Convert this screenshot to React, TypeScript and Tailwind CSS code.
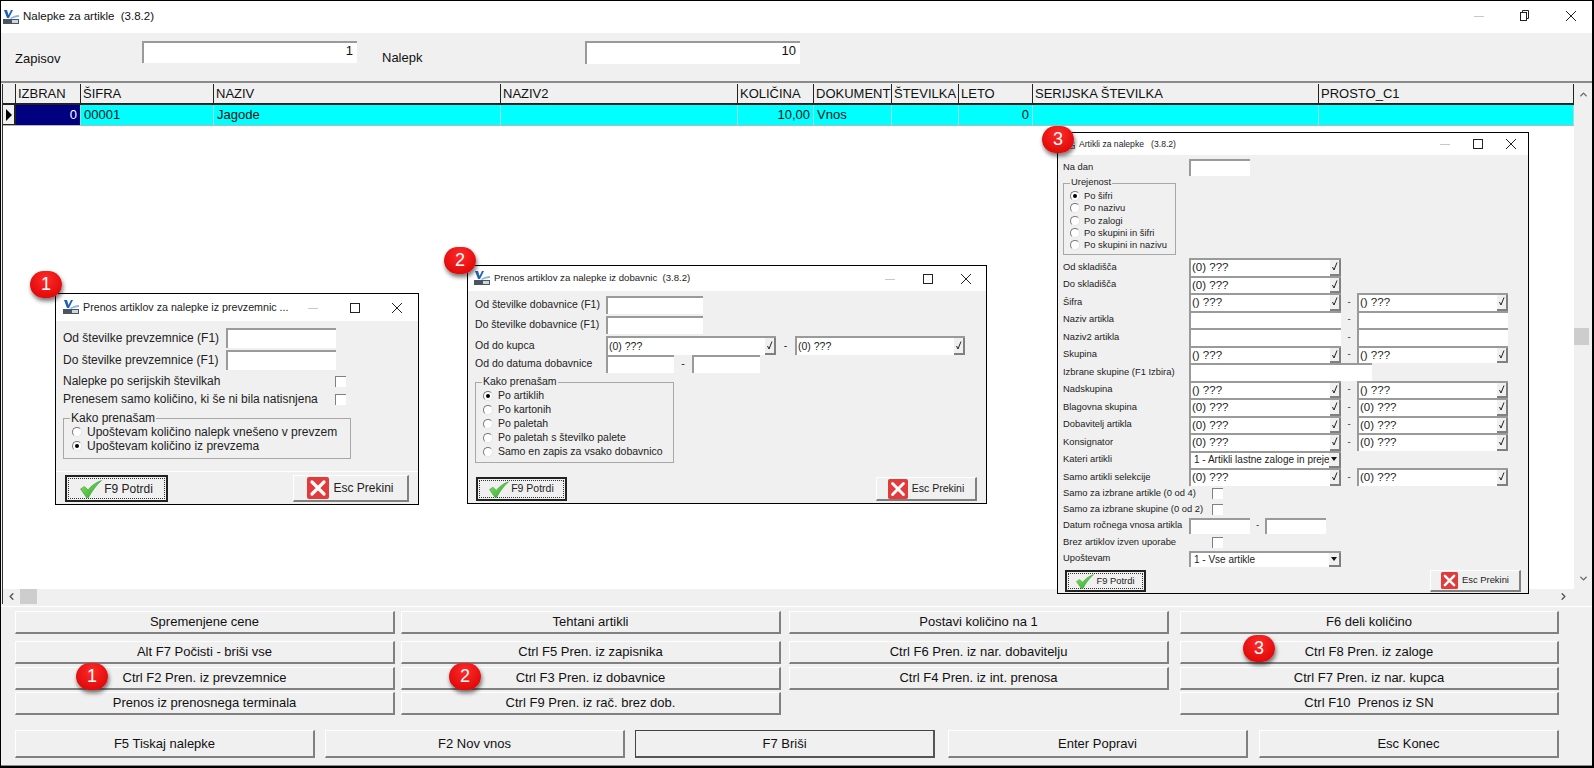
import React from 'react';
import { ChevronUp, ChevronDown, ChevronLeft, ChevronRight } from 'lucide-react';

const columns = [
  { title: 'IZBRAN', w: 'w-[65px]', value: '0', right: true, navy: true },
  { title: 'ŠIFRA', w: 'w-[133px]', value: '00001' },
  { title: 'NAZIV', w: 'w-[287px]', value: 'Jagode' },
  { title: 'NAZIV2', w: 'w-[237px]', value: '' },
  { title: 'KOLIČINA', w: 'w-[76px]', value: '10,00', right: true },
  { title: 'DOKUMENT', w: 'w-[78px]', value: 'Vnos' },
  { title: 'ŠTEVILKA', w: 'w-[67px]', value: '' },
  { title: 'LETO', w: 'w-[74px]', value: '0', right: true },
  { title: 'SERIJSKA ŠTEVILKA', w: 'w-[286px]', value: '' },
  { title: 'PROSTO_C1', w: 'w-[255px]', value: '' },
];

const AppLogo = ({ w = 16, h = 14 }: { w?: number; h?: number }) => (
  <svg width={w} height={h} viewBox="0 0 16 14" className="shrink-0">
    <path d="M1 0h3l1.5 5L8 0h2L6 8H4z" fill="#1f5fb8" />
    <path d="M7 8 C10 6 13 5 16 5 L16 7 C13 7 10 8 8 9z" fill="#8fb6e0" />
    <rect x="0" y="9" width="16" height="5" fill="#4a5560" />
    <rect x="9" y="10" width="6" height="3" fill="#cfd6dc" />
  </svg>
);

const WinControls = ({ restore, gap = 'gap-[27px]', className = '' }: { restore?: boolean; gap?: string; className?: string }) => (
  <div className={`flex items-center ${gap} ${className}`}>
    <svg width="10" height="10" viewBox="0 0 10 10">
      <path d="M0 5.5h10" stroke="#c8c8c8" />
    </svg>
    {restore ? (
      <svg width="10" height="11" viewBox="0 0 10 11" fill="none" stroke="#222">
        <rect x="0.5" y="2.5" width="6" height="8" />
        <path d="M2.5 2.5v-2h6v8h-2" />
      </svg>
    ) : (
      <svg width="10" height="10" viewBox="0 0 10 10" fill="none" stroke="#222">
        <rect x="0.5" y="0.5" width="9" height="9" />
      </svg>
    )}
    <svg width="10" height="10" viewBox="0 0 10 10" stroke="#222">
      <path d="M0 0l10 10M10 0L0 10" />
    </svg>
  </div>
);

const Sunken = ({ className, children }: { className: string; children?: React.ReactNode }) => (
  <div className={`bg-white border-t-2 border-l-2 border-t-[#9a9a9a] border-l-[#9a9a9a] overflow-hidden ${className}`}>
    {children}
  </div>
);

const Combo = ({ value, className }: { value: string; className: string }) => (
  <Sunken className={`flex items-stretch justify-between ${className}`}>
    <span className="pl-px leading-none self-center whitespace-nowrap">{value}</span>
    <span className="w-[11px] bg-[#f0f0f0] border-r-2 border-b-2 border-r-[#808080] border-b-[#808080] flex items-center justify-center shrink-0">
      <svg width="6" height="9" viewBox="0 0 6 9" fill="none" stroke="#222">
        <path d="M0.5 5l1.5 3L5 0.5" />
      </svg>
    </span>
  </Sunken>
);

const Select = ({ value, className }: { value: string; className: string }) => (
  <Sunken className={`flex items-stretch justify-between ${className}`}>
    <span className="pl-[3px] self-center leading-none whitespace-nowrap overflow-hidden">{value}</span>
    <span className="w-[12px] bg-[#f0f0f0] border-r-2 border-b-2 border-r-[#808080] border-b-[#808080] flex items-center justify-center shrink-0">
      <svg width="6" height="4" viewBox="0 0 6 4">
        <path d="M0 0h6L3 4z" fill="#111" />
      </svg>
    </span>
  </Sunken>
);

const CheckBox = ({ className = '' }: { className?: string }) => (
  <span className={`block w-[11px] h-[11px] bg-white border-t border-l border-t-[#808080] border-l-[#808080] ${className}`} />
);

const Radio = ({ on }: { on?: boolean }) => (
  <span className="w-[10px] h-[10px] rounded-full bg-white border border-[#e4e4e4] border-t-[#777] border-l-[#777] flex items-center justify-center shrink-0">
    {on && <span className="w-[4px] h-[4px] rounded-full bg-black" />}
  </span>
);

const Group = ({ title, items, className, rowClass, textClass }: {
  title: string;
  items: { label: string; on?: boolean }[];
  className: string;
  rowClass: string;
  textClass: string;
}) => (
  <div className={`border border-[#a8a8a8] ${className}`}>
    <div className="-mt-[7px] ml-[6px] px-px w-fit bg-[#f0f0f0] leading-none h-[13px]">{title}</div>
    {items.map(item => (
      <div key={item.label} className={`flex items-center ${rowClass}`}>
        <Radio on={item.on} />
        <span className={`whitespace-nowrap ${textClass}`}>{item.label}</span>
      </div>
    ))}
  </div>
);

const CheckMark = ({ w, h }: { w: number; h: number }) => (
  <svg width={w} height={h} viewBox="0 0 22 18" className="shrink-0">
    <defs>
      <linearGradient id="chk" x1="0" y1="0" x2="1" y2="1">
        <stop offset="0" stopColor="#8fe05a" />
        <stop offset="1" stopColor="#1fa83a" />
      </linearGradient>
    </defs>
    <path d="M0.5 9 L4.5 6.5 L8 10 C11 6 15.5 2.5 21.5 0.5 C16 5.5 12 11 8.5 17.5 L6.5 17.5 Z" fill="url(#chk)" stroke="#3c9a2c" strokeWidth="0.6" />
  </svg>
);

const CrossMark = ({ size }: { size: number }) => (
  <svg width={size} height={size} viewBox="0 0 22 22" className="shrink-0">
    <rect width="22" height="22" rx="2" fill="#e23b3b" />
    <path d="M5 5l12 12M17 5L5 17" stroke="#fff" strokeWidth="3.2" strokeLinecap="round" />
  </svg>
);

const ConfirmBtn = ({ className, w, h }: { className: string; w: number; h: number }) => (
  <div className={`border-2 border-[#222] p-px bg-[#f0f0f0] ${className}`}>
    <div className="w-full h-full border border-dotted border-[#333] flex items-center justify-center gap-[4px]">
      <CheckMark w={w} h={h} />
      <span className="-ml-[2px] whitespace-nowrap">F9 Potrdi</span>
    </div>
  </div>
);

const CancelBtn = ({ className, size }: { className: string; size: number }) => (
  <div className={`bg-[#f0f0f0] border-t border-l border-t-white border-l-white border-r-2 border-b-2 border-r-[#808080] border-b-[#808080] flex items-center justify-center gap-[4px] ${className}`}>
    <CrossMark size={size} />
    <span className="whitespace-nowrap">Esc Prekini</span>
  </div>
);

const Badge = ({ n, className }: { n: number; className: string }) => (
  <div className={`absolute z-20 w-[32px] h-[27px] rounded-full bg-[radial-gradient(circle_at_50%_30%,#ff2a2a,#d60000)] shadow-[1px_3px_4px_rgba(0,0,0,0.55)] text-white text-[18px] leading-[27px] text-center ${className}`}>
    {n}
  </div>
);

const DialogFrame = ({ title, className, barClass, textClass, gap, logo, children }: {
  title: string;
  className: string;
  barClass: string;
  textClass: string;
  gap?: string;
  logo?: React.ReactNode;
  children: React.ReactNode;
}) => (
  <div className={`absolute z-10 border border-black bg-[#f0f0f0] text-[#222] flex flex-col ${className}`}>
    <div className={`bg-white flex items-center justify-between shrink-0 ${barClass}`}>
      <div className="flex items-center gap-[4px] min-w-0">
        {logo ?? <AppLogo />}
        <span className={`whitespace-pre ${textClass}`}>{title}</span>
      </div>
      <WinControls gap={gap} />
    </div>
    {children}
  </div>
);

const FirstDialog = () => (
  <DialogFrame
    title="Prenos artiklov za nalepke iz prevzemnic ..."
    className="left-[54px] top-[292px] w-[364px] h-[212px] text-[12px]"
    barClass="h-[27px] pl-[7px] pr-[16px]"
    textClass="text-[10.7px]"
    gap="gap-[32px]"
  >
    <div className="pl-[7px] pt-[7px] flex-1 flex flex-col">
      <div className="flex items-center h-[20px] mb-[2px]">
        <span className="w-[163px]">Od številke prevzemnice (F1)</span>
        <Sunken className="w-[110px] h-full" />
      </div>
      <div className="flex items-center h-[20px]">
        <span className="w-[163px]">Do številke prevzemnice (F1)</span>
        <Sunken className="w-[110px] h-full" />
      </div>
      <div className="flex items-center h-[18px] mt-[2px]">
        <span className="w-[272px]">Nalepke po serijskih številkah</span>
        <CheckBox />
      </div>
      <div className="flex items-center h-[18px]">
        <span className="w-[272px]">Prenesem samo količino, ki še ni bila natisnjena</span>
        <CheckBox />
      </div>
      <Group
        title="Kako prenašam"
        className="w-[288px] h-[41px] mt-[10px]"
        rowClass="h-[14px] pl-[8px] first-of-type:mt-[3px]"
        textClass="ml-[5px]"
        items={[
          { label: 'Upoštevam količino nalepk vnešeno v prevzem' },
          { label: 'Upoštevam količino iz prevzema', on: true },
        ]}
      />
    </div>
    <div className="flex justify-between pl-[9px] pr-[9px] pb-[2px] pt-[3px] border-t border-t-white">
      <ConfirmBtn className="w-[103px] h-[27px]" w={22} h={18} />
      <CancelBtn className="w-[116px] h-[27px]" size={22} />
    </div>
  </DialogFrame>
);

const SecondDialog = () => (
  <DialogFrame
    title="Prenos artiklov za nalepke iz dobavnic  (3.8.2)"
    className="left-[466px] top-[264px] w-[520px] h-[239px] text-[10.5px]"
    barClass="h-[25px] pl-[6px] pr-[15px]"
    textClass="text-[9.6px]"
    gap="gap-[28px]"
  >
    <div className="pl-[7px] pt-[5px] flex-1 flex flex-col">
      <div className="flex items-center h-[18px] mb-[2px]">
        <span className="w-[131px] whitespace-nowrap">Od številke dobavnice (F1)</span>
        <Sunken className="w-[97px] h-full" />
      </div>
      <div className="flex items-center h-[18px] mb-[2px]">
        <span className="w-[131px] whitespace-nowrap">Do številke dobavnice (F1)</span>
        <Sunken className="w-[97px] h-full" />
      </div>
      <div className="flex items-center h-[19px]">
        <span className="w-[131px]">Od do kupca</span>
        <Combo value="(0) ???" className="w-[170px] h-full" />
        <span className="w-[19px] text-center">-</span>
        <Combo value="(0) ???" className="w-[170px] h-full" />
      </div>
      <div className="flex items-center h-[18px]">
        <span className="w-[131px] whitespace-nowrap">Od do datuma dobavnice</span>
        <Sunken className="w-[68px] h-full" />
        <span className="w-[18px] text-center">-</span>
        <Sunken className="w-[68px] h-full" />
      </div>
      <Group
        title="Kako prenašam"
        className="w-[199px] h-[81px] mt-[9px]"
        rowClass="h-[14px] pl-[7px] first-of-type:mt-px"
        textClass="ml-[5px]"
        items={[
          { label: 'Po artiklih', on: true },
          { label: 'Po kartonih' },
          { label: 'Po paletah' },
          { label: 'Po paletah s številko palete' },
          { label: 'Samo en zapis za vsako dobavnico' },
        ]}
      />
    </div>
    <div className="flex justify-between pl-[8px] pr-[9px] pb-[2px]">
      <ConfirmBtn className="w-[91px] h-[24px]" w={20} h={17} />
      <CancelBtn className="w-[101px] h-[24px]" size={20} />
    </div>
  </DialogFrame>
);

const FormRow = ({ label, h = 'h-[17.5px]', children }: { label: string; h?: string; children?: React.ReactNode }) => (
  <div className={`flex items-center ${h}`}>
    <span className="w-[126px] whitespace-nowrap">{label}</span>
    {children}
  </div>
);

const Dash = () => <span className="w-[16px] text-center">-</span>;

const RangeRow = ({ label, from, to }: { label: string; from: string; to: string }) => (
  <FormRow label={label}>
    <Combo value={from} className="w-[152px] h-full text-[11.5px]" />
    <Dash />
    <Combo value={to} className="w-[151px] h-full text-[11.5px]" />
  </FormRow>
);

const ThirdDialog = () => (
  <DialogFrame
    title="Artikli za nalepke   (3.8.2)"
    className="left-[1056px] top-[131px] w-[472px] h-[462px] text-[9.4px]"
    barClass="h-[22px] pl-[5px] pr-[12px]"
    textClass="text-[8.6px]"
    gap="gap-[23px]"
    logo={<AppLogo w={12} h={11} />}
  >
    <div className="pl-[5px] pt-[4px] flex-1 flex flex-col">
      <FormRow label="Na dan" h="h-[17px]">
        <Sunken className="w-[61px] h-full" />
      </FormRow>
      <Group
        title="Urejenost"
        className="w-[113px] h-[72px] mt-[7px] mb-[3px]"
        rowClass="h-[12.3px] pl-[6px]"
        textClass="ml-[4px]"
        items={[
          { label: 'Po šifri', on: true },
          { label: 'Po nazivu' },
          { label: 'Po zalogi' },
          { label: 'Po skupini in šifri' },
          { label: 'Po skupini in nazivu' },
        ]}
      />
      <FormRow label="Od skladišča"><Combo value="(0) ???" className="w-[152px] h-full text-[11.5px]" /></FormRow>
      <FormRow label="Do skladišča"><Combo value="(0) ???" className="w-[152px] h-full text-[11.5px]" /></FormRow>
      <RangeRow label="Šifra" from="() ???" to="() ???" />
      <FormRow label="Naziv artikla">
        <Sunken className="w-[152px] h-full" />
        <Dash />
        <Sunken className="w-[151px] h-full" />
      </FormRow>
      <FormRow label="Naziv2 artikla">
        <Sunken className="w-[152px] h-full" />
        <Dash />
        <Sunken className="w-[151px] h-full" />
      </FormRow>
      <RangeRow label="Skupina" from="() ???" to="() ???" />
      <FormRow label="Izbrane skupine (F1 Izbira)"><Sunken className="w-[183px] h-full" /></FormRow>
      <RangeRow label="Nadskupina" from="() ???" to="() ???" />
      <RangeRow label="Blagovna skupina" from="(0) ???" to="(0) ???" />
      <RangeRow label="Dobavitelj artikla" from="(0) ???" to="(0) ???" />
      <RangeRow label="Konsignator" from="(0) ???" to="(0) ???" />
      <FormRow label="Kateri artikli"><Select value="1 - Artikli lastne zaloge in prejete" className="w-[152px] h-full text-[10px]" /></FormRow>
      <RangeRow label="Samo artikli selekcije" from="(0) ???" to="(0) ???" />
      <div className="flex items-center h-[16px]">
        <span className="w-[149px] whitespace-nowrap">Samo za izbrane artikle (0 od 4)</span>
        <CheckBox />
      </div>
      <div className="flex items-center h-[16px]">
        <span className="w-[149px] whitespace-nowrap">Samo za izbrane skupine (0 od 2)</span>
        <CheckBox />
      </div>
      <FormRow label="Datum ročnega vnosa artikla" h="h-[16px]">
        <Sunken className="w-[61px] h-full" />
        <span className="w-[15px] text-center">-</span>
        <Sunken className="w-[61px] h-full" />
      </FormRow>
      <div className="flex items-center h-[17px]">
        <span className="w-[149px] whitespace-nowrap">Brez artiklov izven uporabe</span>
        <CheckBox />
      </div>
      <FormRow label="Upoštevam" h="h-[16px]">
        <Select value="1 - Vse artikle" className="w-[152px] h-full text-[10px]" />
      </FormRow>
    </div>
    <div className="flex justify-between pl-[7px] pr-[7px] pb-[1px]">
      <ConfirmBtn className="w-[81px] h-[22px]" w={18} h={15} />
      <CancelBtn className="w-[91px] h-[22px]" size={17} />
    </div>
  </DialogFrame>
);

const RaisedBtn = ({ label, className, focused }: { label: string; className: string; focused?: boolean }) => (
  <div className={`bg-[#f0f0f0] border-t border-l ${focused ? 'border-t-[#444] border-l-[#444] border-r-[#555] border-b-[#555]' : 'border-t-white border-l-white border-r-[#808080] border-b-[#808080]'} border-r-2 border-b-2 flex items-center justify-center ${className}`}>
    {label}
  </div>
);

const actionRows = [
  { mt: 'mt-[4px]', cells: ['Spremenjene cene', 'Tehtani artikli', 'Postavi količino na 1', 'F6 deli količino'] },
  { mt: 'mt-[7px]', cells: ['Alt F7 Počisti - briši vse', 'Ctrl F5 Pren. iz zapisnika', 'Ctrl F6 Pren. iz nar. dobavitelju', 'Ctrl F8 Pren. iz zaloge'] },
  { mt: 'mt-[3px]', cells: ['Ctrl F2 Pren. iz prevzemnice', 'Ctrl F3 Pren. iz dobavnice', 'Ctrl F4 Pren. iz int. prenosa', 'Ctrl F7 Pren. iz nar. kupca'] },
  { mt: 'mt-[2px]', cells: ['Prenos iz prenosnega terminala', 'Ctrl F9 Pren. iz rač. brez dob.', '', 'Ctrl F10  Prenos iz SN'] },
];

const cellClasses = ['w-[380px]', 'w-[380px] ml-[6px]', 'w-[380px] ml-[8px]', 'w-[379px] ml-[11px]'];

export default function App() {
  return (
    <div className="relative w-[1594px] h-[768px] overflow-hidden bg-[#f0f0f0] border-t border-l border-black border-r-2 border-b-2 font-['Liberation_Sans',Arial,sans-serif] text-[13px] text-[#111] flex flex-col">
      <div className="h-[32px] bg-white flex items-center justify-between pl-[2px] pr-[16px] shrink-0">
        <div className="flex items-center gap-[4px]">
          <AppLogo />
          <span className="text-[11.5px] whitespace-pre">Nalepke za artikle  (3.8.2)</span>
        </div>
        <WinControls restore gap="gap-[36px]" className="-mt-[3px]" />
      </div>

      <div className="h-[48px] flex items-start pt-[8px] pl-[14px] shrink-0">
        <span className="w-[127px] mt-[8px]">Zapisov</span>
        <Sunken className="w-[215px] h-[22px] text-right pr-[4px] leading-[16px]">1</Sunken>
        <span className="w-[203px] ml-[25px] mt-[7px]">Nalepk</span>
        <Sunken className="w-[215px] h-[23px] text-right pr-[4px] leading-[16px]">10</Sunken>
      </div>

      <div className="h-[525px] flex flex-col border-t-2 border-t-[#8a8a8a] pt-px pl-px shrink-0">
        <div className="flex-1 flex border-l border-l-[#333] min-h-0">
          <div className="w-[1571px] bg-white flex flex-col">
            <div className="flex h-[21px] bg-[#f0f0f0] border-b-2 border-b-[#222]">
              <div className="w-[13px] border-r border-r-[#222]" />
              {columns.map(col => (
                <div key={col.title} className={`${col.w} px-[2px] border-r border-r-[#222] leading-[20px] whitespace-nowrap overflow-hidden`}>
                  {col.title}
                </div>
              ))}
            </div>
            <div className="flex h-[21px] border-b border-b-[#b8b8b8]">
              <div className="w-[13px] bg-[#f0f0f0] border-r-2 border-b border-r-[#222] border-b-[#222] flex items-center justify-center">
                <svg width="6" height="12" viewBox="0 0 6 12">
                  <path d="M0 0l6 6-6 6z" fill="#000" />
                </svg>
              </div>
              {columns.map(col => (
                <div
                  key={col.title}
                  className={`${col.w} px-[3px] border-r border-r-[#9fdede] leading-[20px] whitespace-nowrap ${col.right ? 'text-right' : ''} ${col.navy ? 'bg-[#000080] text-white' : 'bg-[#00ffff]'}`}
                >
                  {col.value}
                </div>
              ))}
            </div>
          </div>
          <div className="w-[19px] flex flex-col items-center text-[#666]">
            <ChevronUp size={11} strokeWidth={3} className="mt-[5px]" />
            <div className="w-[15px] h-[17px] bg-[#cdcdcd] mt-[228px] self-start" />
            <ChevronDown size={11} strokeWidth={3} className="mt-auto mb-[5px]" />
          </div>
        </div>
        <div className="h-[15px] flex items-center border-l border-l-[#333] mb-[2px] text-[#555]">
          <ChevronLeft size={11} strokeWidth={3} className="ml-[3px]" />
          <div className="w-[17px] h-[15px] bg-[#cdcdcd] ml-[3px]" />
          <ChevronRight size={11} strokeWidth={3} className="ml-auto mr-[23px]" />
        </div>
      </div>

      <div className="flex-1 border-t border-t-white pl-[14px] border-b border-b-[#8a8a8a]">
        {actionRows.map(row => (
          <div key={row.cells[0]} className={`flex h-[23px] whitespace-pre ${row.mt}`}>
            {row.cells.map((label, i) =>
              label ? (
                <RaisedBtn key={label} label={label} className={cellClasses[i]} />
              ) : (
                <div key={i} className={cellClasses[i]} />
              ),
            )}
          </div>
        ))}
        <div className="flex h-[28px] mt-[15px]">
          <RaisedBtn label="F5 Tiskaj nalepke" className="w-[300px]" />
          <RaisedBtn label="F2 Nov vnos" className="w-[300px] ml-[10px]" />
          <RaisedBtn label="F7 Briši" className="w-[300px] ml-[10px]" focused />
          <RaisedBtn label="Enter Popravi" className="w-[300px] ml-[13px]" />
          <RaisedBtn label="Esc Konec" className="w-[300px] ml-[11px]" />
        </div>
      </div>

      <FirstDialog />
      <SecondDialog />
      <ThirdDialog />

      <Badge n={1} className="left-[29px] top-[270px]" />
      <Badge n={2} className="left-[443px] top-[246px]" />
      <Badge n={3} className="left-[1041px] top-[125px]" />
      <Badge n={1} className="left-[75px] top-[662px]" />
      <Badge n={2} className="left-[448px] top-[662px]" />
      <Badge n={3} className="left-[1242px] top-[634px]" />
    </div>
  );
}
